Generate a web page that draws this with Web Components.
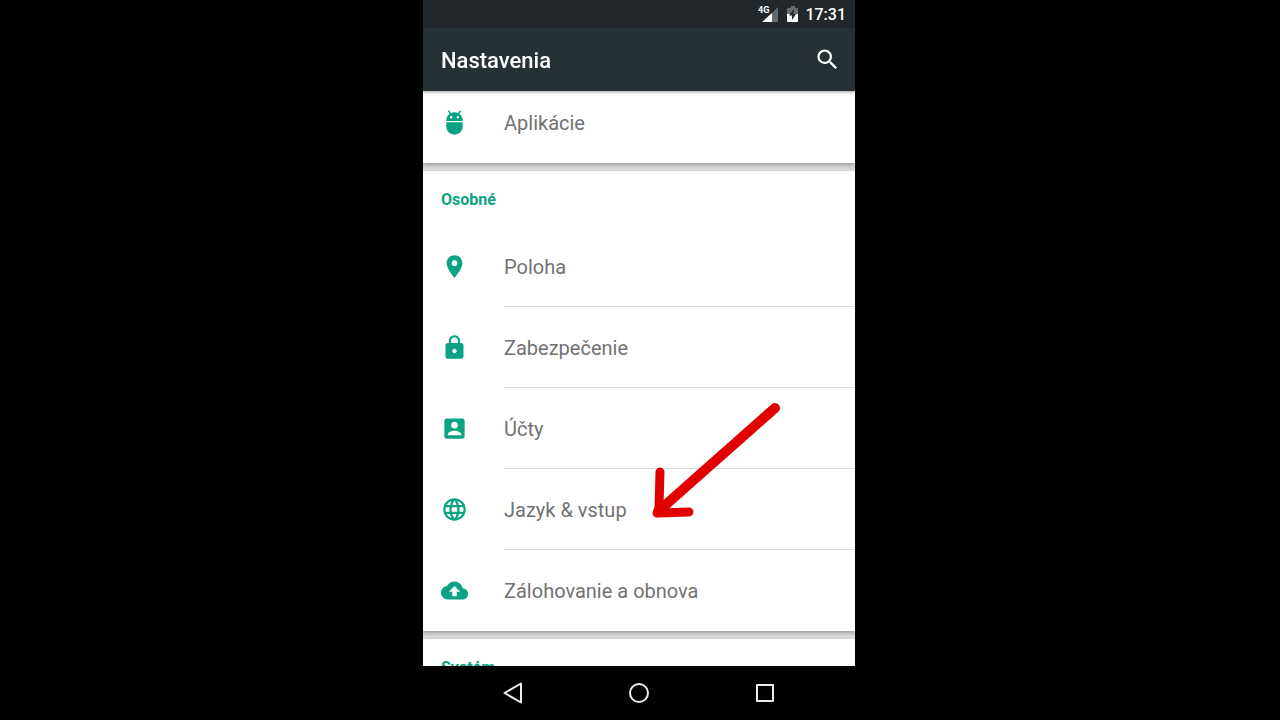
<!DOCTYPE html>
<html lang="sk">
<head>
<meta charset="utf-8">
<meta name="viewport" content="width=device-width, initial-scale=1">
<title>Nastavenia</title>
<style>
  html, body { height: 100%; margin: 0; }
  body {
    box-sizing: border-box;
    display: flex;
    justify-content: center;
    padding-right: 2px;
    background: #000;
    font-family: Roboto, "Noto Sans", sans-serif;
    overflow: hidden;
  }
</style>
</head>
<body>
<phone-screen>
  <status-bar slot="status" time="17:31"></status-bar>
  <app-bar slot="bar">Nastavenia</app-bar>
  <settings-card>
    <settings-row icon="android">Aplikácie</settings-row>
  </settings-card>
  <settings-card heading="Osobné">
    <settings-row icon="place">Poloha</settings-row>
    <settings-row icon="lock">Zabezpečenie</settings-row>
    <settings-row icon="account">Účty</settings-row>
    <settings-row icon="language">Jazyk &amp; vstup</settings-row>
    <settings-row icon="backup">Zálohovanie a obnova</settings-row>
  </settings-card>
  <settings-card heading="Systém"></settings-card>
  <pointer-arrow slot="overlay"></pointer-arrow>
  <nav-bar slot="nav"></nav-bar>
</phone-screen>

<script>
const ICONS = {
  android: '<path d="M4.700 11.800h14.600V15.500a7.300 7.300 0 0 1-14.600 0z"/><path fill-rule="evenodd" d="M7 1.200l1.900 2.300A7.300 7.300 0 0 1 12 2.800c1.100 0 2.200.2 3.100.7L17 1.200l1 .8-1.700 2.200A7.300 7.300 0 0 1 19.300 10.700H4.700a7.300 7.300 0 0 1 3-6.500L6 2zM9 6.200a1.100 1.100 0 1 0 0 2.200 1.100 1.100 0 0 0 0-2.200zm6 0a1.100 1.100 0 1 0 0 2.200 1.100 1.100 0 0 0 0-2.200z"/>',
  place: '<path d="M12 2C8.130 2 5 5.130 5 9c0 5.250 7 13 7 13s7-7.750 7-13c0-3.870-3.130-7-7-7zm0 9.500a2.500 2.500 0 0 1 0-5 2.500 2.500 0 0 1 0 5z"/>',
  lock: '<path d="M18 8h-1V6c0-2.760-2.240-5-5-5S7 3.240 7 6v2H6c-1.100 0-2 .9-2 2v10c0 1.100.9 2 2 2h12c1.100 0 2-.9 2-2V10c0-1.100-.9-2-2-2zm-6 9c-1.100 0-2-.9-2-2s.9-2 2-2 2 .9 2 2-.9 2-2 2zm3.100-9H8.900V6c0-1.710 1.390-3.100 3.100-3.100 1.710 0 3.100 1.390 3.100 3.100v2z"/>',
  account: '<path d="M3 5v14c0 1.100.89 2 2 2h14c1.100 0 2-.9 2-2V5c0-1.100-.9-2-2-2H5c-1.110 0-2 .9-2 2zm12 4c0 1.660-1.340 3-3 3s-3-1.340-3-3 1.340-3 3-3 3 1.340 3 3zm-9 8c0-2 4-3.100 6-3.100s6 1.100 6 3.100v1H6v-1z"/>',
  language: '<path d="M11.990 2C6.470 2 2 6.480 2 12s4.470 10 9.990 10C17.520 22 22 17.520 22 12S17.520 2 11.990 2zm6.930 6h-2.950c-.32-1.250-.78-2.450-1.380-3.560 1.840.63 3.370 1.910 4.330 3.560zM12 4.040c.83 1.200 1.480 2.530 1.910 3.960h-3.820c.43-1.430 1.080-2.760 1.910-3.960zM4.260 14C4.100 13.360 4 12.690 4 12s.1-1.360.26-2h3.380c-.08.66-.14 1.320-.14 2 0 .68.06 1.340.14 2H4.260zm.82 2h2.950c.32 1.250.78 2.450 1.380 3.560-1.840-.63-3.370-1.900-4.330-3.560zm2.950-8H5.080c.96-1.660 2.490-2.930 4.330-3.560C8.810 5.550 8.350 6.750 8.030 8zM12 19.960c-.83-1.200-1.480-2.530-1.910-3.960h3.820c-.43 1.430-1.080 2.760-1.910 3.960zM14.340 14H9.660c-.09-.66-.16-1.320-.16-2 0-.68.07-1.350.16-2h4.680c.09.65.16 1.320.16 2 0 .68-.07 1.340-.16 2zm.25 5.560c.6-1.110 1.060-2.310 1.380-3.560h2.950c-.96 1.650-2.490 2.930-4.330 3.560zM16.360 14c.08-.66.14-1.320.14-2 0-.68-.06-1.340-.14-2h3.380c.16.64.26 1.310.26 2s-.1 1.360-.26 2h-3.380z"/>',
  backup: '<path d="M19.350 10.040C18.670 6.590 15.640 4 12 4 9.110 4 6.600 5.640 5.350 8.040 2.340 8.360 0 10.910 0 14c0 3.310 2.690 6 6 6h13c2.760 0 5-2.240 5-5 0-2.640-2.050-4.780-4.650-4.960zM14 13v4h-4v-4H7l5-5 5 5h-3z"/>'
};

class Base extends HTMLElement {
  connectedCallback() {
    if (this.shadowRoot) return;
    this.attachShadow({ mode: 'open' }).innerHTML = this.view();
    this.ready();
  }
  ready() {}
}

customElements.define('phone-screen', class extends Base {
  view() {
    return `<style>
      :host { position: relative; display: flex; flex-direction: column; height: 100vh; aspect-ratio: 3 / 5; max-width: 100vw; overflow: hidden; background: #000; }
      main { flex: 1; min-height: 0; overflow-y: auto; scrollbar-width: none; background: #dcdcdc; }
      .list { display: flex; flex-direction: column; gap: 8px; }
    </style>
    <slot name="status"></slot>
    <slot name="bar"></slot>
    <main><div class="list"><slot></slot></div></main>
    <slot name="nav"></slot>
    <slot name="overlay"></slot>`;
  }
  ready() {
    const list = this.shadowRoot.querySelector('main');
    requestAnimationFrame(() => { list.scrollTop = 9; });
  }
});

customElements.define('status-bar', class extends Base {
  view() {
    return `<style>
      :host { box-sizing: border-box; display: flex; align-items: center; justify-content: flex-end; gap: 7px; height: 28px; padding: 2px 9px 0; background: #21272b; color: #fff; }
      svg { display: block; }
      .net { font: 700 9px Roboto, sans-serif; fill: #fff; }
      time { font-size: 16px; line-height: 20px; font-weight: 500; }
    </style>
    <svg width="22" height="18" viewBox="0 0 22 18" role="img" aria-label="Signál">
      <path d="M21 1v15h-6V7z" fill="#656a6d"/>
      <path d="M15 7v9H5z" fill="#fff"/>
      <text class="net" x="1" y="7">4G</text>
    </svg>
    <svg width="12" height="18" viewBox="0 0 12 18" role="img" aria-label="Batéria">
      <path d="M5 0h4v2h2q1 0 1 1v6H1V3q0-1 1-1h3z" fill="#686d70"/>
      <path d="M1 8h11v7q0 1-1 1H2q-1 0-1-1z" fill="#fff"/>
      <path d="M8 3L3 9.500h3V14l4-6H7.500z" fill="#21272b"/>
    </svg>
    <time>${this.getAttribute('time')}</time>`;
  }
});

customElements.define('app-bar', class extends Base {
  view() {
    return `<style>
      :host { position: relative; z-index: 1; display: flex; align-items: center; justify-content: space-between; height: 63px; padding: 0 14px 0 18px; background: #263135; color: #fff; box-shadow: 0 1px 3px rgba(0,0,0,.4); }
      h1 { margin: 0; padding-top: 2px; font-size: 22px; line-height: 28px; font-weight: 500; }
      button { display: flex; padding: 0; border: 0; background: none; color: inherit; }
      svg { fill: currentColor; }
    </style>
    <h1><slot></slot></h1>
    <button aria-label="Hľadať"><svg width="27" height="27" viewBox="0 0 24 24"><path d="M15.500 14h-.79l-.28-.27A6.471 6.471 0 0 0 16 9.500 6.500 6.500 0 1 0 9.500 16c1.610 0 3.090-.59 4.230-1.570l.27.28v.79l5 4.990L20.490 19l-4.990-5zm-6 0C7.010 14 5 11.990 5 9.500S7.010 5 9.500 5 14 7.010 14 9.500 11.990 14 9.500 14z"/></svg></button>`;
  }
});

customElements.define('settings-card', class extends Base {
  view() {
    const heading = this.getAttribute('heading');
    return `<style>
      :host { display: block; background: #fff; box-shadow: 0 2px 4px rgba(0,0,0,.3); }
      h2 { box-sizing: border-box; height: 55px; margin: 0; padding: 19px 18px 0; color: #0ba383; font-size: 16px; line-height: 20px; font-weight: 700; }
    </style>${heading ? `<h2>${heading}</h2>` : ''}<slot></slot>`;
  }
});

customElements.define('settings-row', class extends Base {
  view() {
    return `<style>
      :host { display: block; }
      a { display: flex; height: 81px; padding-left: 18px; color: #727272; text-decoration: none; }
      svg { flex: none; align-self: center; margin-right: 36px; fill: #0ba383; }
      .label { box-sizing: border-box; flex: 1; display: flex; align-items: center; padding-top: 2px; border-bottom: 1px solid #dadada; font-size: 20px; line-height: 28px; }
      :host(:last-of-type) .label { border-bottom-color: transparent; }
    </style>
    <a href="#${this.getAttribute('icon')}"><svg width="27" height="27" viewBox="0 0 24 24" aria-hidden="true">${ICONS[this.getAttribute('icon')]}</svg><span class="label"><slot></slot></span></a>`;
  }
});

customElements.define('pointer-arrow', class extends Base {
  view() {
    return `<style>
      :host { position: absolute; left: 228px; top: 402px; pointer-events: none; }
      svg { display: block; fill: none; stroke: #e10000; stroke-width: 9; stroke-linecap: round; stroke-linejoin: round; }
    </style>
    <svg width="131" height="118" viewBox="651 402 131 118" aria-hidden="true"><path stroke-width="10" d="M775 408L662 508"/><path d="M660 472L659 508 657 513 689 512"/></svg>`;
  }
});

customElements.define('nav-bar', class extends Base {
  view() {
    return `<style>
      :host { display: block; background: #000; }
      nav { display: flex; align-items: center; justify-content: center; gap: 99px; height: 54px; }
      button { display: flex; padding: 0; border: 0; background: none; }
      svg { fill: none; stroke: #ececec; stroke-width: 2; stroke-linejoin: round; }
    </style>
    <nav>
      <button aria-label="Späť"><svg width="27" height="27" viewBox="0 0 27 27"><path d="M21 3.500v19L4.500 13z"/></svg></button>
      <button aria-label="Domov"><svg width="27" height="27" viewBox="0 0 27 27"><circle cx="13" cy="13" r="9"/></svg></button>
      <button aria-label="Prehľad"><svg width="27" height="27" viewBox="0 0 27 27"><path d="M5 5h16v16H5z"/></svg></button>
    </nav>`;
  }
});
</script>
</body>
</html>
